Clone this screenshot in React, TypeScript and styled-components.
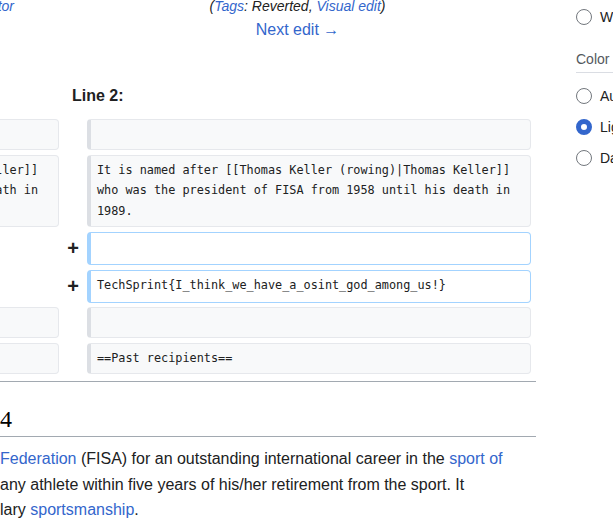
import React from "react";
import styled, { createGlobalStyle } from "styled-components";

const GlobalStyle = createGlobalStyle`
  html, body {
    margin: 0;
    padding: 0;
    background: #ffffff;
    overflow: hidden;
  }
  body {
    font-family: "Liberation Sans", Arial, sans-serif;
    color: #202122;
  }
`;

const Layout = styled.div`
  display: flex;
  align-items: flex-start;
  width: 613px;
  height: 522px;
  overflow: hidden;
`;

const Main = styled.main`
  flex: 0 0 536px;
  width: 536px;
  margin-top: -5px;
`;

// the diff table is wider than the visible column, its left half lies off screen
const DiffTable = styled.div`
  width: 954px;
  margin-left: -418px;
`;

const DiffHeader = styled.div`
  display: grid;
  grid-template-columns: 1fr 1fr;
`;

const HeaderCell = styled.div`
  display: flex;
  flex-direction: column;
`;

const TitleLine = styled.div<{ $align?: "center" | "right" }>`
  font-size: 14px;
  line-height: 22.4px;
  font-style: italic;
  white-space: nowrap;
  text-align: ${(p) => p.$align ?? "center"};
  padding-right: ${(p) => (p.$align === "right" ? "45px" : "0")};
`;

const NavLine = styled.div`
  font-size: 16px;
  line-height: 25.6px;
  text-align: center;
  white-space: nowrap;
`;

const WikiLink = styled.a`
  color: #3366cc;
  text-decoration: none;
  cursor: pointer;
`;

const DiffGrid = styled.div`
  display: grid;
  grid-template-columns: 28px 444px 28px 444px;
  row-gap: 4.8px;
  padding: 0 5px;
  margin-top: 40.2px;
`;

const LineNo = styled.div`
  grid-column: span 2;
  font-size: 16px;
  font-weight: bold;
  line-height: 25.6px;
  padding-left: 13px;
  margin-bottom: 5.4px;
`;

const Marker = styled.div`
  font-size: 20px;
  font-weight: bold;
  line-height: 33px;
  text-align: center;
  color: #202122;
`;

const EmptySide = styled.div`
  grid-column: span 2;
`;

const DiffCell = styled.div<{ $kind: "context" | "added" }>`
  font-family: "DejaVu Sans Mono", monospace;
  font-size: 11.83px;
  line-height: 20.8px;
  min-height: 20.8px;
  padding: 4px 6px;
  border: 1px solid ${(p) => (p.$kind === "added" ? "#a3d3ff" : "#e6e8ec")};
  border-left: 4px solid ${(p) => (p.$kind === "added" ? "#a3d3ff" : "#dcdfe4")};
  border-radius: 4px;
  background: ${(p) => (p.$kind === "added" ? "#ffffff" : "#f8f9fa")};
  color: #202122;
  white-space: pre-wrap;
  overflow-wrap: break-word;
`;

const Divider = styled.div`
  height: 0;
  border-top: 1px solid #a2a9b1;
  margin-top: 7.2px;
`;

const SectionHeading = styled.h2`
  margin: 21.4px 0 0;
  font-family: "Liberation Serif", "Times New Roman", serif;
  font-size: 24px;
  font-weight: normal;
  line-height: 33px;
  border-bottom: 1px solid #a2a9b1;
  color: #000000;
`;

const Paragraph = styled.p`
  margin: 8.8px 0 0;
  font-size: 16px;
  line-height: 25.6px;
  white-space: nowrap;
`;

const Sidebar = styled.aside`
  flex: 0 0 auto;
  margin-left: 40px;
  padding-top: 1.5px;
  display: flex;
  flex-direction: column;
`;

const RadioRow = styled.label`
  display: flex;
  align-items: center;
  gap: 8px;
  height: 31px;
  font-size: 14px;
  white-space: nowrap;
  color: #202122;
`;

const Radio = styled.span<{ $checked?: boolean }>`
  flex: 0 0 16px;
  width: 16px;
  height: 16px;
  box-sizing: border-box;
  border-radius: 50%;
  background: #ffffff;
  border: ${(p) => (p.$checked ? "5px solid #3366cc" : "1px solid #72777d")};
`;

const GroupLabel = styled.div`
  margin-top: 16.5px;
  padding-bottom: 3px;
  font-size: 14px;
  line-height: 20px;
  color: #54595d;
  border-bottom: 1px solid #dadde3;
  margin-bottom: 7.5px;
  white-space: nowrap;
`;

type DiffRow = { kind: "context" | "added"; text: string };

const rows: DiffRow[] = [
  { kind: "context", text: "" },
  {
    kind: "context",
    text: "It is named after [[Thomas Keller (rowing)|Thomas Keller]] who was the president of FISA from 1958 until his death in 1989.",
  },
  { kind: "added", text: "" },
  { kind: "added", text: "TechSprint{I_think_we_have_a_osint_god_among_us!}" },
  { kind: "context", text: "" },
  { kind: "context", text: "==Past recipients==" },
];

const colorOptions = [
  { label: "Automatic", checked: false },
  { label: "Light", checked: true },
  { label: "Dark", checked: false },
];

export default function App() {
  const renderRows = () =>
    rows.map((row, index) => {
      if (row.kind === "added") {
        return (
          <React.Fragment key={index}>
            <EmptySide />
            <Marker>+</Marker>
            <DiffCell $kind="added">{row.text}</DiffCell>
          </React.Fragment>
        );
      }
      return (
        <React.Fragment key={index}>
          <Marker />
          <DiffCell $kind="context">{row.text}</DiffCell>
          <Marker />
          <DiffCell $kind="context">{row.text}</DiffCell>
        </React.Fragment>
      );
    });

  return (
    <>
      <GlobalStyle />
      <Layout>
        <Main>
          <DiffTable>
            <DiffHeader>
              <HeaderCell>
                <TitleLine $align="right">
                  <WikiLink>Mobile edit</WikiLink>, <WikiLink>Visual editor</WikiLink>
                </TitleLine>
                <NavLine>
                  <WikiLink>← Previous edit</WikiLink>
                </NavLine>
              </HeaderCell>
              <HeaderCell>
                <TitleLine>
                  (<WikiLink>Tags</WikiLink>: Reverted, <WikiLink>Visual edit</WikiLink>)
                </TitleLine>
                <NavLine>
                  <WikiLink>Next edit →</WikiLink>
                </NavLine>
              </HeaderCell>
            </DiffHeader>
            <DiffGrid>
              <LineNo>Line 2:</LineNo>
              <LineNo>Line 2:</LineNo>
              {renderRows()}
            </DiffGrid>
          </DiffTable>
          <Divider />
          <SectionHeading>4</SectionHeading>
          <Paragraph>
            <WikiLink>Federation</WikiLink> (FISA) for an outstanding international career in the{" "}
            <WikiLink>sport of</WikiLink>
            <br />
            any athlete within five years of his/her retirement from the sport. It
            <br />
            lary <WikiLink>sportsmanship</WikiLink>.
          </Paragraph>
        </Main>
        <Sidebar>
          <RadioRow>
            <Radio />
            Wide
          </RadioRow>
          <GroupLabel>Color</GroupLabel>
          {colorOptions.map((option) => (
            <RadioRow key={option.label}>
              <Radio $checked={option.checked} />
              {option.label}
            </RadioRow>
          ))}
        </Sidebar>
      </Layout>
    </>
  );
}
